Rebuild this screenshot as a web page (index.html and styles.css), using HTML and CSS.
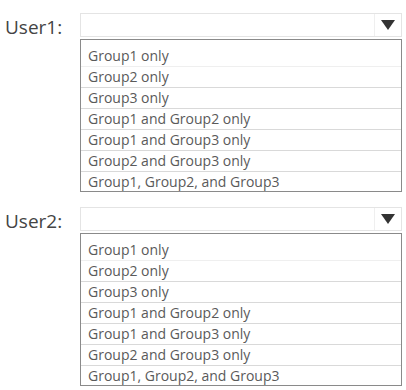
FILE: index.html
```html
<!DOCTYPE html>
<html lang="en">
<head>
    <meta charset="UTF-8">
    <meta name="viewport" content="width=device-width, initial-scale=1.0">
    <title>User group selection</title>
    <link rel="stylesheet" href="styles.css">
</head>
<body>

    <div class="form">
        <div class="field">
            <div class="label">User1:</div>
            <div class="control">
                <div class="dropdown">
                    <span class="value"></span>
                    <span class="arrow-box"><span class="arrow"></span></span>
                </div>
                <ul class="options">
                    <li>Group1 only</li>
                    <li>Group2 only</li>
                    <li>Group3 only</li>
                    <li>Group1 and Group2 only</li>
                    <li>Group1 and Group3 only</li>
                    <li>Group2 and Group3 only</li>
                    <li>Group1, Group2, and Group3</li>
                </ul>
            </div>
        </div>

        <div class="field">
            <div class="label">User2:</div>
            <div class="control">
                <div class="dropdown">
                    <span class="value"></span>
                    <span class="arrow-box"><span class="arrow"></span></span>
                </div>
                <ul class="options">
                    <li>Group1 only</li>
                    <li>Group2 only</li>
                    <li>Group3 only</li>
                    <li>Group1 and Group2 only</li>
                    <li>Group1 and Group3 only</li>
                    <li>Group2 and Group3 only</li>
                    <li>Group1, Group2, and Group3</li>
                </ul>
            </div>
        </div>
    </div>

</body>
</html>
```

FILE: styles.css
```css
body {
    margin: 0;
    background: #fff;
    font-family: "Open Sans", "Segoe UI", Tahoma, sans-serif;
}
.form {
    padding-top: 13px;
    display: flex;
    flex-direction: column;
    gap: 15px;
}
.field {
    display: grid;
    grid-template-columns: 80px 322px;
}
.label {
    padding: 2px 0 0 5px;
    height: 24px;
    line-height: 24px;
    font-size: 19px;
    color: #444;
}
.control {
    display: flex;
    flex-direction: column;
    gap: 2px;
}
.dropdown {
    height: 24px;
    border: 1px solid #e4e4e4;
    box-sizing: border-box;
    display: flex;
    justify-content: space-between;
}
.arrow-box {
    width: 26px;
    border-left: 1px solid #efefef;
    display: flex;
    align-items: center;
    justify-content: center;
}
.arrow {
    width: 0;
    height: 0;
    border-left: 7px solid transparent;
    border-right: 7px solid transparent;
    border-top: 10px solid #333;
}
.options {
    list-style: none;
    margin: 0;
    padding: 6px 0 0 0;
    border: 1px solid #8a8a8a;
    font-size: 14px;
    color: #5a5a5a;
}
.options li {
    height: 20px;
    line-height: 20px;
    padding-left: 7px;
    border-bottom: 1px solid #d9d9d9;
}
.options li:first-child {
    border-bottom-color: #efefef;
}
.options li:last-child {
    height: 19px;
    border-bottom: none;
}
```
